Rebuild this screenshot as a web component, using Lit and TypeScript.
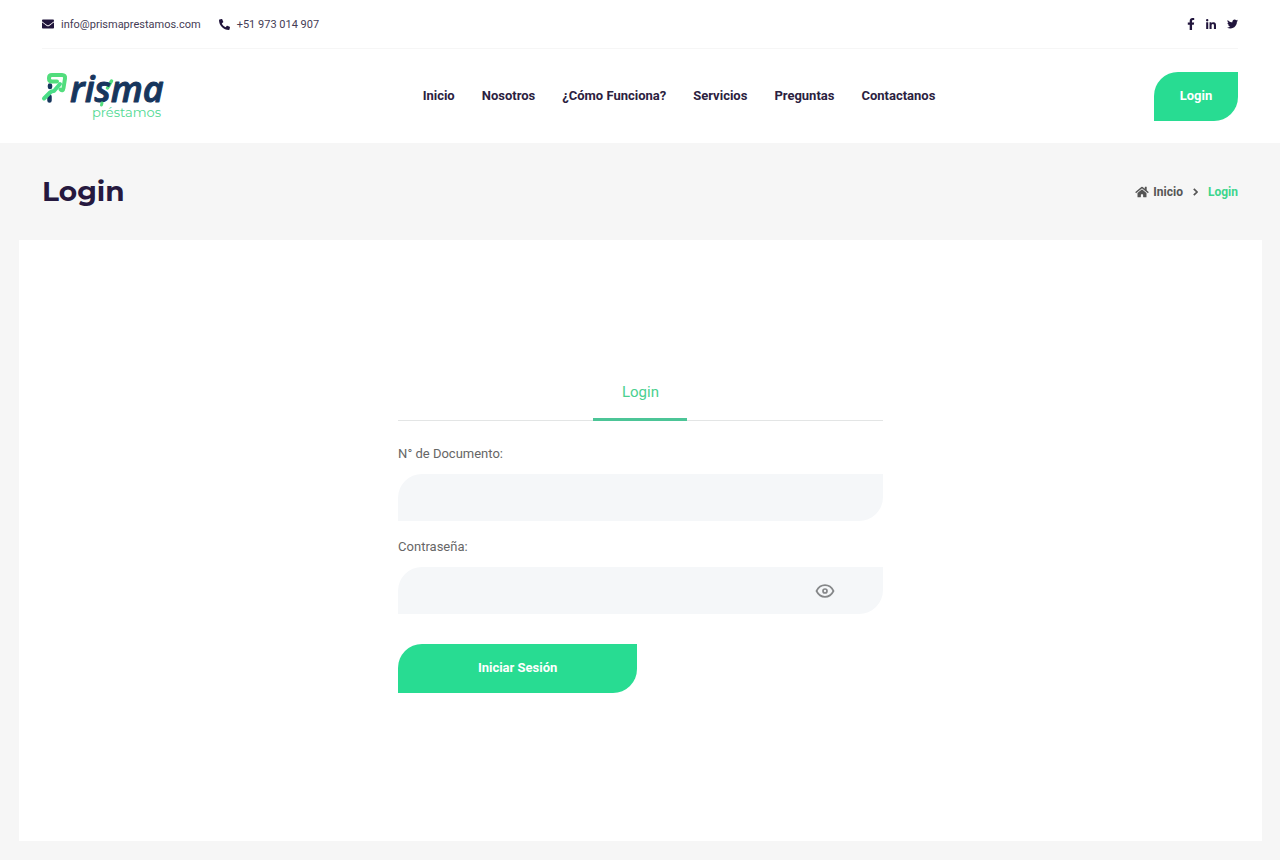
import { LitElement, html, css, svg } from "lit";
import { customElement, state } from "lit/decorators.js";

const icon = (viewBox: string, d: string, width: number, height: number) => html`
  <svg class="icon" viewBox=${viewBox} width=${width} height=${height} aria-hidden="true">${svg`<path fill="currentColor" d=${d}></path>`}</svg>`;

const ENVELOPE = "M502.3 190.8c3.9-3.1 9.7-.2 9.7 4.7V400c0 26.5-21.5 48-48 48H48c-26.5 0-48-21.5-48-48V195.600c0-5 5.700-7.800 9.700-4.700 22.400 17.400 52.100 39.500 154.100 113.600 21.100 15.400 56.700 47.800 92.200 47.600 35.700.3 72-32.800 92.300-47.600 102-74.100 131.600-96.300 154-113.700zM256 320c23.200.4 56.600-29.200 73.400-41.400 132.700-96.300 142.800-104.700 173.400-128.700 5.800-4.500 9.200-11.500 9.200-18.900v-19c0-26.500-21.500-48-48-48H48c-26.500 0-48 21.500-48 48v19c0 7.400 3.400 14.300 9.200 18.900 30.600 23.900 40.700 32.400 173.400 128.700 16.800 12.200 50.200 41.800 73.400 41.400z";
const PHONE = "M18.600 24.600l104-24c11.300-2.600 22.900 3.300 27.500 13.900l48 112c4.200 9.800 1.400 21.300-6.900 28l-60.600 49.600c36 76.700 98.900 140.500 177.200 177.200l49.600-60.600c6.800-8.300 18.200-11.100 28-6.900l112 48C508 366.500 514 378.100 511.400 389.400l-24 104C484.900 504.200 475.300 512 464 512 207.900 512 0 304.500 0 48 0 36.800 7.700 27.100 18.600 24.600z";
const FACEBOOK = "M279.140 288l14.220-92.660h-88.910v-60.130c0-25.350 12.420-50.060 52.240-50.060h40.420V6.260S260.430 0 225.360 0c-73.220 0-121.080 44.380-121.080 124.720v70.620H22.890V288h81.390v224h100.170V288z";
const LINKEDIN = "M100.280 448H7.400V148.900h92.880zM53.790 108.100C24.090 108.100 0 83.500 0 53.800a53.790 53.790 0 0 1 107.580 0c0 29.700-24.100 54.300-53.790 54.300zM447.900 448h-92.680V302.400c0-34.700-.7-79.200-48.290-79.200-48.290 0-55.690 37.700-55.690 76.700V448h-92.780V148.900h89.080v40.800h1.300c12.400-23.500 42.690-48.300 87.880-48.300 94 0 111.280 61.900 111.280 142.300V448z";
const TWITTER = "M459.370 151.716c.325 4.548.325 9.097.325 13.645 0 138.720-105.583 298.558-298.558 298.558-59.452 0-114.680-17.219-161.137-47.106 8.447.974 16.568 1.299 25.340 1.299 49.055 0 94.213-16.568 130.274-44.832-46.132-.975-84.792-31.188-98.112-72.772 6.498.974 12.995 1.624 19.818 1.624 9.421 0 18.843-1.300 27.614-3.573-48.081-9.747-84.143-51.980-84.143-102.985v-1.299c13.969 7.797 30.214 12.670 47.431 13.319-28.264-18.843-46.781-51.005-46.781-87.391 0-19.492 5.197-37.360 14.294-52.954 51.655 63.675 129.300 105.258 216.365 109.807-1.624-7.797-2.599-15.918-2.599-24.040 0-57.828 46.782-104.934 104.934-104.934 30.213 0 57.502 12.670 76.670 33.137 23.715-4.548 46.456-13.320 66.599-25.340-7.798 24.366-24.366 44.833-46.132 57.827 21.117-2.273 41.584-8.122 60.426-16.243-14.292 20.791-32.161 39.308-52.628 54.253z";
const HOME = "M280.370 148.260L96 300.110V464a16 16 0 0 0 16 16l112.060-.29a16 16 0 0 0 15.920-16V368a16 16 0 0 1 16-16h64a16 16 0 0 1 16 16v95.640a16 16 0 0 0 16 16.050L464 480a16 16 0 0 0 16-16V300L295.670 148.260a12.190 12.190 0 0 0-15.300 0zM571.600 251.470L488 182.560V44.050a12 12 0 0 0-12-12h-56a12 12 0 0 0-12 12v72.610L318.470 43a48 48 0 0 0-61 0L4.340 251.470a12 12 0 0 0-1.600 16.900l25.500 31A12 12 0 0 0 45.150 301l235.220-193.740a12.190 12.190 0 0 1 15.300 0L530.900 301a12 12 0 0 0 16.900-1.600l25.500-31a12 12 0 0 0-1.700-16.930z";

const NAV = ["Inicio", "Nosotros", "¿Cómo Funciona?", "Servicios", "Preguntas", "Contactanos"];

@customElement("app-root")
export class AppRoot extends LitElement {
  @state() private visible = false;

  static styles = css`
    :host {
      display: block;
      min-height: 100vh;
      box-sizing: border-box;
      padding-bottom: 19px;
      background: #f6f6f6;
      color: #2b2140;
      font-family: Roboto, "Liberation Sans", sans-serif;
      font-size: 13px;
      line-height: 20px;
    }
    * { box-sizing: border-box; }
    a { color: inherit; text-decoration: none; }
    .icon { display: block; flex: none; }
    .header { background: #fff; padding: 0 42px; }
    .topbar {
      display: flex;
      justify-content: space-between;
      align-items: center;
      height: 49px;
      border-bottom: 1px solid #f6f6f6;
      font-size: 11px;
      line-height: 21px;
    }
    .contacts { display: flex; gap: 18px; }
    .contact { display: flex; align-items: center; gap: 7px; color: #453c55; }
    .contact .icon, .social { color: #21153c; }
    .social { display: flex; align-items: center; gap: 11px; }
    .mainbar {
      display: grid;
      grid-template-columns: 162px 1fr 84px;
      align-items: center;
      height: 94px;
    }
    .logo { display: block; width: 126px; }
    .logo svg { display: block; overflow: visible; }
    .word {
      font: italic 600 36px "Open Sans", sans-serif;
      fill: #17365d;
      stroke: #17365d;
      stroke-width: 1px;
      stroke-linejoin: round;
    }
    .tagline { font: 400 13px Montserrat, Lato, sans-serif; fill: #4fd993; }
    .nav { display: flex; justify-content: center; gap: 27px; font-weight: 700; }
    .leaf {
      display: block;
      border: 0;
      padding: 0;
      height: 49px;
      border-radius: 24px 0;
      background: #28dc92;
      color: #fff;
      font: 700 13px/48px Roboto, sans-serif;
      text-align: center;
      cursor: pointer;
    }
    .banner {
      display: flex;
      justify-content: space-between;
      align-items: center;
      height: 97px;
      padding: 0 42px;
    }
    .title { margin: 0; font: 700 28px/39px Montserrat, Inter, sans-serif; color: #26193f; }
    .crumbs { display: flex; align-items: center; gap: 10px; font-size: 12px; font-weight: 700; color: #555; }
    .crumb { display: flex; align-items: center; gap: 4px; }
    .current { color: #3dd58d; }
    .panel {
      display: flex;
      justify-content: center;
      align-items: center;
      margin: 0 18px 0 19px;
      min-height: calc(100vh - 259px);
      padding: 24px 0 46px;
      background: #fff;
    }
    .form { width: 39%; min-width: 300px; color: #666; }
    .tabs { display: flex; justify-content: center; border-bottom: 1px solid #e3e5e5; margin-bottom: 23px; }
    .tab {
      width: 94px;
      height: 54px;
      margin-bottom: -1px;
      padding: 0;
      border: 0;
      border-bottom: 3px solid #4cc597;
      background: none;
      color: #4ad08f;
      font: 400 15px/20px Roboto, sans-serif;
    }
    .label { display: block; margin-bottom: 10px; }
    .field { position: relative; margin-bottom: 16px; }
    .input {
      display: block;
      width: 100%;
      height: 47px;
      padding: 0 20px;
      border: 0;
      border-radius: 24px 0;
      background: #f5f7f9;
      font: 400 14px/20px Roboto, sans-serif;
      color: #444;
    }
    .toggle {
      position: absolute;
      right: 48px;
      top: 14px;
      padding: 0;
      border: 0;
      background: none;
      color: #858789;
      cursor: pointer;
    }
    .submit { width: 239px; margin-top: 30px; }
  `;

  render() {
    return html`
      <header class="header">
        <div class="topbar">
          <div class="contacts">
            <a class="contact" href="mailto:info@prismaprestamos.com">${icon("0 0 512 512", ENVELOPE, 12, 12)}info@prismaprestamos.com</a>
            <a class="contact" href="tel:+51973014907">${icon("0 0 512 512", PHONE, 11, 11)}+51 973 014 907</a>
          </div>
          <div class="social">
            <a href="#" aria-label="Facebook">${icon("0 0 320 512", FACEBOOK, 8, 12)}</a>
            <a href="#" aria-label="LinkedIn">${icon("0 0 448 448", LINKEDIN, 10, 10)}</a>
            <a href="#" aria-label="Twitter">${icon("0 0 512 512", TWITTER, 11, 12)}</a>
          </div>
        </div>
        <div class="mainbar">
          <a class="logo" href="#" aria-label="Prisma préstamos">
            <svg width="126" height="52" viewBox="0 0 126 52">
              <path d="M8 15.500V17M7.500 26.500V30.500" fill="none" stroke="#17365d" stroke-width="4.500" stroke-linecap="round"/>
              <path d="M15 11.500H10Q7 11.500 7 8.500V8Q7 5 10 5H20Q23.500 5 23 8.500L21.500 18Q21 21.500 18.500 19.500" fill="none" stroke="#52dd7d" stroke-width="4" stroke-linecap="round" stroke-linejoin="round"/>
              <path d="M2 28.500L8 22.500Q9.500 21 12 21L18 14" fill="none" stroke="#4add86" stroke-width="4" stroke-linecap="round" stroke-linejoin="round"/>
              <path d="M69.500 11L65.500 18" fill="none" stroke="#52dd7d" stroke-width="3.500" stroke-linecap="round"/>
              <text class="word" x="28" y="32">risma</text>
              <path d="M60 33L59.500 35" fill="none" stroke="#52dd7d" stroke-width="3" stroke-linecap="round"/>
              <text class="tagline" x="50" y="47">préstamos</text>
            </svg>
          </a>
          <nav class="nav">${NAV.map((item) => html`<a href="#">${item}</a>`)}</nav>
          <a class="leaf" href="#">Login</a>
        </div>
      </header>
      <section class="banner">
        <h1 class="title">Login</h1>
        <nav class="crumbs" aria-label="Ruta">
          <a class="crumb" href="#">${icon("0 0 576 512", HOME, 14, 12)}Inicio</a>
          <svg width="5" height="8" viewBox="0 0 5 8" aria-hidden="true"><path d="M.8.8L4 4L.8 7.200" fill="none" stroke="currentColor" stroke-width="1.700"/></svg>
          <span class="current">Login</span>
        </nav>
      </section>
      <main class="panel">
        <form class="form" @submit=${(e: Event) => e.preventDefault()}>
          <div class="tabs"><button class="tab" type="button">Login</button></div>
          <label class="label" for="doc">N° de Documento:</label>
          <div class="field"><input class="input" id="doc" type="text" /></div>
          <label class="label" for="pass">Contraseña:</label>
          <div class="field">
            <input class="input" id="pass" type=${this.visible ? "text" : "password"} />
            <button class="toggle" type="button" aria-label="Mostrar contraseña" @click=${() => (this.visible = !this.visible)}>
              <svg class="icon" width="20" height="20" viewBox="0 0 20 20" fill="none" stroke="currentColor" stroke-width="1.700">
                <path d="M1.500 10C3.500 6 6.500 4.200 10 4.200S16.500 6 18.500 10C16.500 14 13.500 15.800 10 15.800S3.500 14 1.500 10Z"/>
                <circle cx="10" cy="10" r="2"/>
              </svg>
            </button>
          </div>
          <button class="leaf submit" type="submit">Iniciar Sesión</button>
        </form>
      </main>
    `;
  }
}
